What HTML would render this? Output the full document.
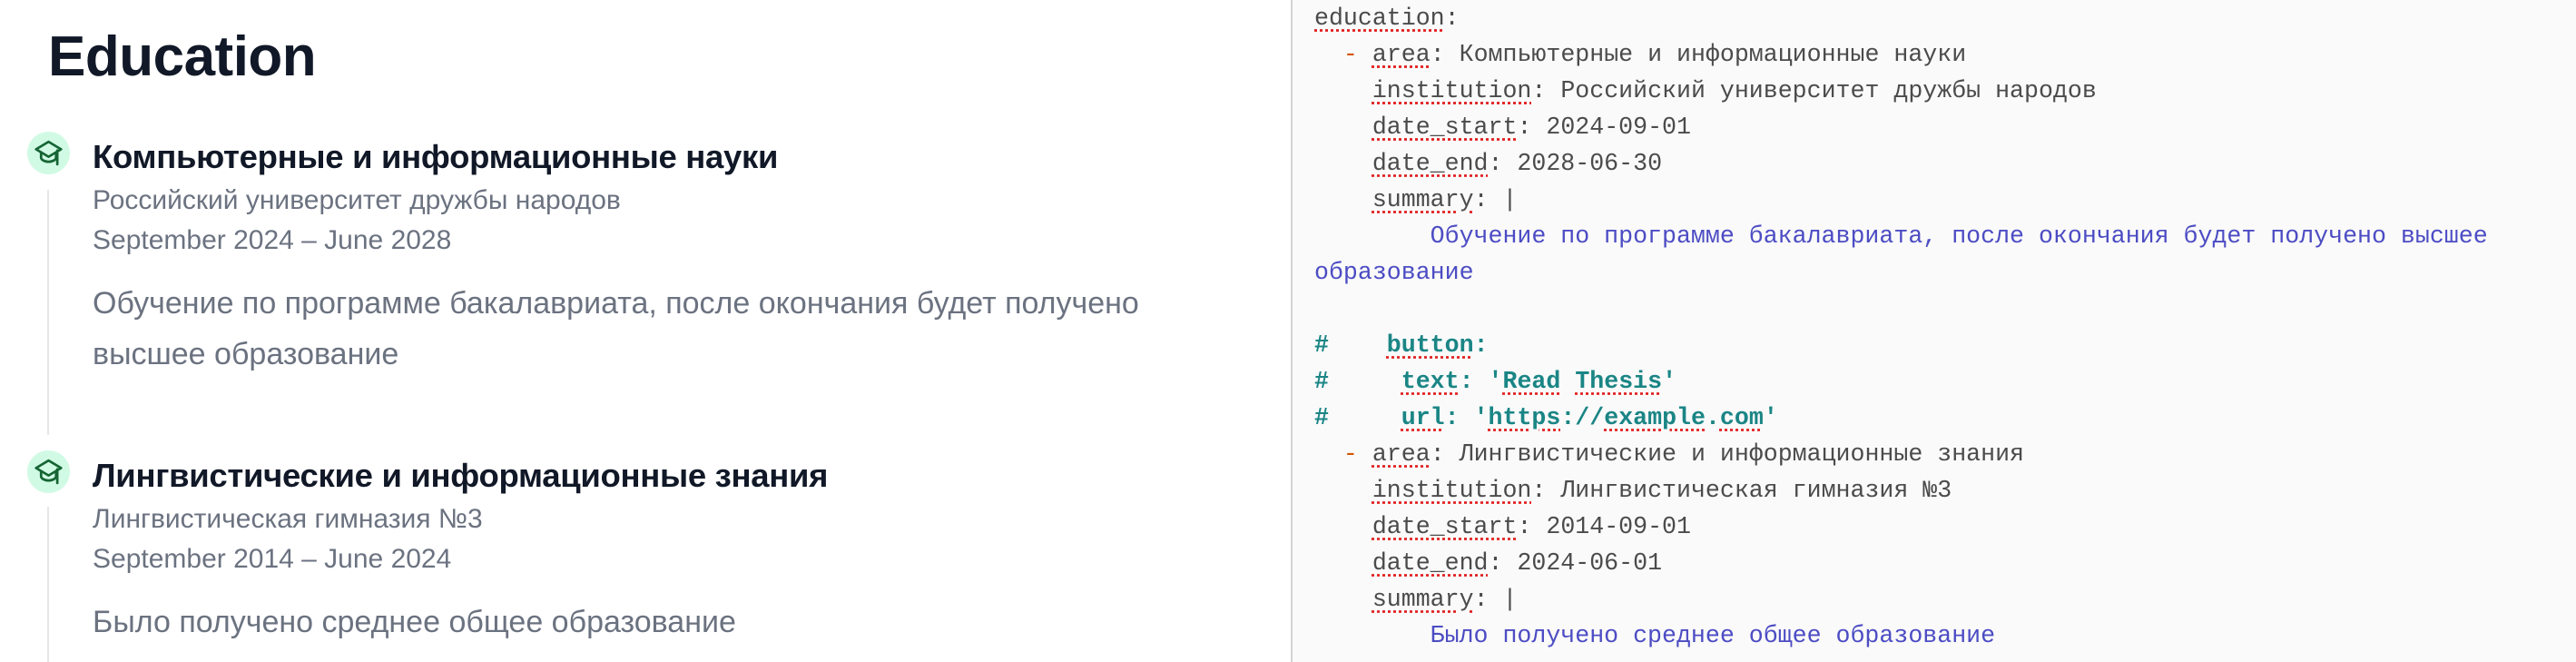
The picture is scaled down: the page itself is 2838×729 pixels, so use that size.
<!DOCTYPE html>
<html><head><meta charset="utf-8"><style>
body{margin:0;width:2838px;height:729px;background:#fff;position:relative;overflow:hidden;font-family:"Liberation Sans",sans-serif}
.a{position:absolute;white-space:nowrap}
h1{position:absolute;left:53px;top:27px;margin:0;font-size:62px;font-weight:700;color:#111827;letter-spacing:-0.5px}
.ic{position:absolute;width:47px;height:47px;border-radius:50%;background:#d1fae5;left:30px}
.ic svg{position:absolute;left:7px;top:7px}
.t{font-size:36.5px;font-weight:700;color:#111827;left:102px;letter-spacing:-0.3px}
.s{font-size:30px;color:#6b7280;left:102px}
.d{font-size:34px;color:#6b7280;left:102px;line-height:56px}
.vl{position:absolute;left:52px;width:2px;background:#e5e7eb}
.ed{position:absolute;left:1422px;top:0;width:1416px;height:729px;background:#fafafa;border-left:2px solid #d4d4d4}
pre{margin:0;position:absolute;left:24px;top:0;font-family:"Liberation Mono","DejaVu Sans Mono",monospace;font-size:26.6px;line-height:40px;color:#4b4b4b}
.k{text-decoration:underline dotted #e11d1d;text-underline-offset:5px}
.o{color:#d35400}.b{color:#4c4cc4}.c{color:#1b8585;font-weight:700}
</style></head><body>
<h1>Education</h1>
<div class="ic" style="top:145px"><svg width="33" height="33" viewBox="0 0 24 24" fill="none" stroke="#166534" stroke-width="2" stroke-linejoin="round" stroke-linecap="round"><path d="M12 3 2 9l10 6 10-6z"/><path d="M6 11.5v4c0 2 3 3.5 6 3.5s6-1.5 6-3.5v-4"/><path d="M19 10v11"/></svg></div>
<div class="a t" style="top:152px">Компьютерные и информационные науки</div>
<div class="a s" style="top:204px">Российский университет дружбы народов</div>
<div class="a s" style="top:248px">September 2024 – June 2028</div>
<div class="a d" style="top:306px">Обучение по программе бакалавриата, после окончания будет получено<br>высшее образование</div>
<div class="vl" style="top:209px;height:270px"></div>
<div class="ic" style="top:496px"><svg width="33" height="33" viewBox="0 0 24 24" fill="none" stroke="#166534" stroke-width="2" stroke-linejoin="round" stroke-linecap="round"><path d="M12 3 2 9l10 6 10-6z"/><path d="M6 11.5v4c0 2 3 3.5 6 3.5s6-1.5 6-3.5v-4"/><path d="M19 10v11"/></svg></div>
<div class="a t" style="top:503px">Лингвистические и информационные знания</div>
<div class="a s" style="top:555px">Лингвистическая гимназия №3</div>
<div class="a s" style="top:599px">September 2014 – June 2024</div>
<div class="a d" style="top:657px">Было получено среднее общее образование</div>
<div class="vl" style="top:558px;height:171px"></div>
<div class="ed"><pre><span class="k">education</span>:
  <span class="o">-</span> <span class="k">area</span>: Компьютерные и информационные науки
    <span class="k">institution</span>: Российский университет дружбы народов
    <span class="k">date_start</span>: 2024-09-01
    <span class="k">date_end</span>: 2028-06-30
    <span class="k">summary</span>: |
<span class="b">        Обучение по программе бакалавриата, после окончания будет получено высшее
образование</span>

<span class="c">#    <span class="k">button</span>:
#     <span class="k">text</span>: '<span class="k">Read</span> <span class="k">Thesis</span>'
#     <span class="k">url</span>: '<span class="k">https</span>://<span class="k">example</span>.<span class="k">com</span>'</span>
  <span class="o">-</span> <span class="k">area</span>: Лингвистические и информационные знания
    <span class="k">institution</span>: Лингвистическая гимназия №3
    <span class="k">date_start</span>: 2014-09-01
    <span class="k">date_end</span>: 2024-06-01
    <span class="k">summary</span>: |
<span class="b">        Было получено среднее общее образование</span></pre></div>
</body></html>
